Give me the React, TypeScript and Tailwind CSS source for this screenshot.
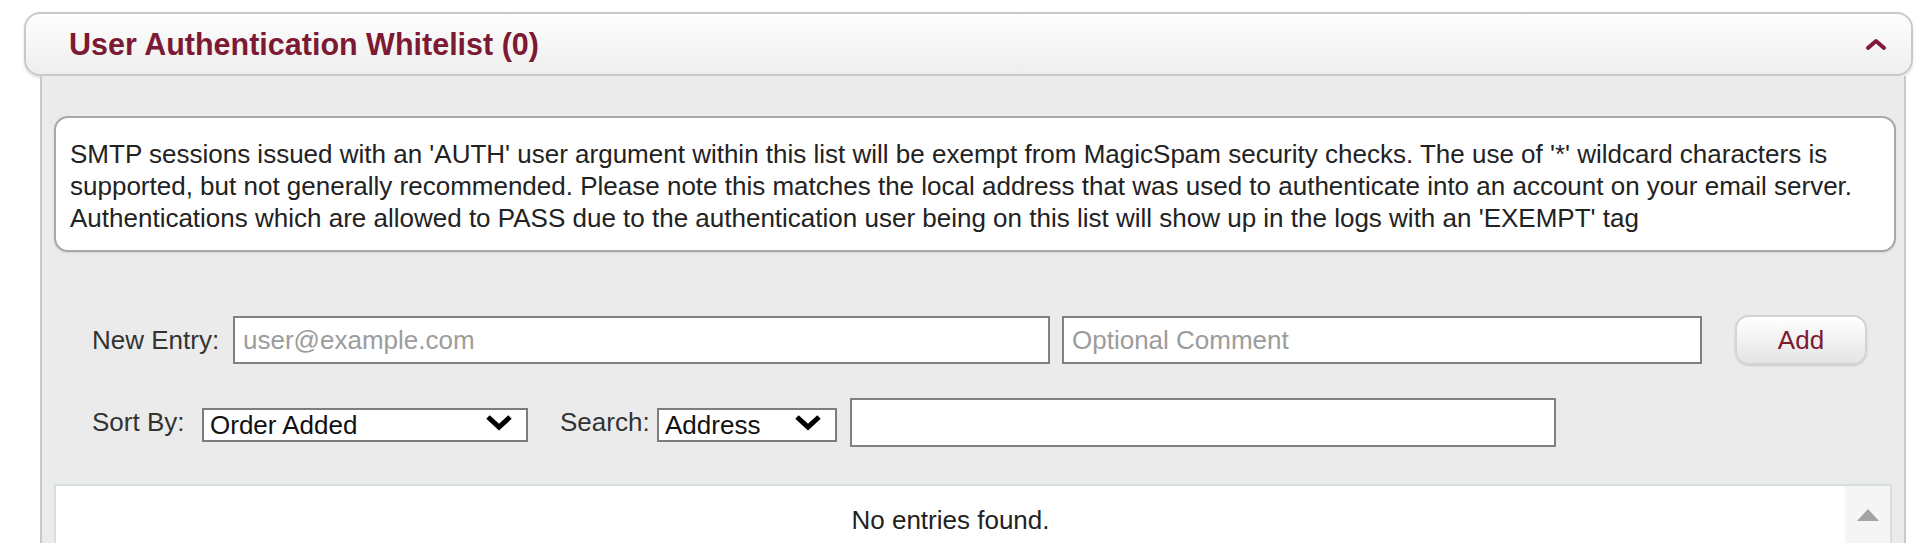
import React from "react"

// Header chevron (collapse)
function ChevronUp() {
  return (
    <svg width="22" height="14" viewBox="0 0 22 14" className="shrink-0">
      <path d="M3 11 L11 4 L19 11" fill="none" stroke="#85193a" strokeWidth="4" strokeLinecap="round" strokeLinejoin="round" />
    </svg>
  )
}

function SelectChevron() {
  return (
    <svg width="30" height="20" viewBox="0 0 30 20">
      <path d="M4 5 L15 15 L26 5" fill="none" stroke="#000" strokeWidth="5" strokeLinejoin="miter" />
    </svg>
  )
}

function Select({ value, options, width }: { value: string; options: string[]; width: string }) {
  return (
    <div className={`relative h-[34px] ${width}`}>
      <select
        defaultValue={value}
        className="w-full h-full appearance-none bg-white border-2 border-[#7d7d7d] pl-[6px] pr-[40px] text-[26px] leading-[28px] text-[#111] outline-none"
      >
        {options.map((o) => (
          <option key={o}>{o}</option>
        ))}
      </select>
      <div className="absolute right-[14px] top-[6px] pointer-events-none">
        <SelectChevron />
      </div>
    </div>
  )
}

export default function App() {
  return (
    <div className="min-h-screen bg-white pt-[12px] pl-[24px] pr-[7px] font-['Liberation_Sans',Arial,sans-serif]">
      {/* header */}
      <div className="h-[64px] rounded-[16px] border-2 border-[#c5ccc5] bg-gradient-to-b from-[#fefefe] to-[#eeeeee] shadow-[0_2px_3px_rgba(0,0,0,0.12)] flex items-center justify-between pl-[43px] pr-[24px]">
        <h2 className="text-[30.5px] leading-[34px] font-bold text-[#7d1a33]">User Authentication Whitelist (0)</h2>
        <ChevronUp />
      </div>

      {/* body panel */}
      <div className="ml-[16px] mr-[7px] border-x-2 border-[#c9c9c9] bg-[#ebebeb] pt-[40px] h-[600px]">
        <div className="ml-[12px] mr-[8px] rounded-[14px] border-2 border-[#a8a8a8] bg-white px-[14px] pt-[20px] pb-[16px] text-[26px] leading-[32px] text-[#222] shadow-[0_1px_2px_rgba(0,0,0,0.1)]">
          SMTP sessions issued with an 'AUTH' user argument within this list will be exempt from MagicSpam security checks. The use of '*' wildcard characters is supported, but not generally recommended. Please note this matches the local address that was used to authenticate into an account on your email server. Authentications which are allowed to PASS due to the authentication user being on this list will show up in the logs with an 'EXEMPT' tag
        </div>

        {/* new entry row */}
        <div className="mt-[63px] pl-[50px] flex items-center h-[50px] text-[26px] text-[#333]">
          <label className="w-[141px] shrink-0">New Entry:</label>
          <input
            placeholder="user@example.com"
            className="w-[817px] h-[48px] bg-white border-2 border-[#808080] px-[8px] text-[26px] text-[#222] placeholder:text-[#9c9c9c] outline-none"
          />
          <input
            placeholder="Optional Comment"
            className="ml-[12px] w-[640px] h-[48px] bg-white border-2 border-[#808080] px-[8px] text-[26px] text-[#222] placeholder:text-[#9c9c9c] outline-none"
          />
          <button className="ml-[33px] w-[132px] h-[50px] rounded-[14px] border-2 border-[#d4d4d4] bg-gradient-to-b from-white to-[#e4e4e4] text-[26px] text-[#7d1a33] shadow-[0_1px_2px_rgba(0,0,0,0.15)]">
            Add
          </button>
        </div>

        {/* sort / search row */}
        <div className="mt-[33px] pl-[50px] flex items-center h-[49px] text-[26px] text-[#333]">
          <label className="w-[110px] shrink-0">Sort By:</label>
          <Select value="Order Added" options={["Order Added", "Address", "Comment"]} width="w-[326px]" />
          <label className="ml-[32px] w-[97px] shrink-0">Search:</label>
          <Select value="Address" options={["Address", "Comment"]} width="w-[180px]" />
          <input className="ml-[13px] w-[706px] h-[49px] bg-white border-2 border-[#808080] px-[8px] text-[26px] outline-none" />
        </div>

        {/* list */}
        <div className="mt-[37px] ml-[12px] mr-[12px] border-2 border-[#d3dfe1] bg-white flex h-[200px]">
          <div className="flex-1 text-center pt-[19px] text-[26px] leading-[30px] text-[#222]">No entries found.</div>
          <div className="w-[45px] bg-[#f5f5f5] flex justify-center pt-[22px]">
            <svg width="24" height="14" viewBox="0 0 24 14">
              <path d="M12 1 L23 13 L1 13 Z" fill="#a3a3a3" />
            </svg>
          </div>
        </div>
      </div>
    </div>
  )
}
